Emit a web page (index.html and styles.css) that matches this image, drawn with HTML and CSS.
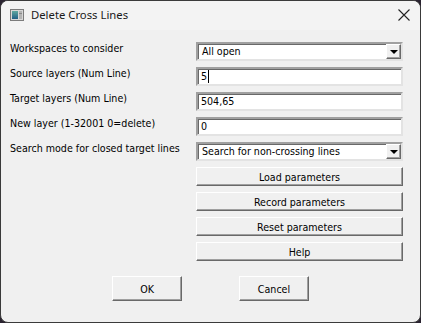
FILE: index.html
```html
<!DOCTYPE html>
<html lang="en">
<head>
    <meta charset="UTF-8">
    <title>Delete Cross Lines</title>
    <link rel="stylesheet" href="styles.css">
</head>
<body>
    <div class="window">
        <div class="titlebar">
            <svg class="app-icon" width="14" height="12" viewBox="0 0 14 12">
                <defs>
                    <linearGradient id="pane" x1="0" y1="0" x2="0" y2="1">
                        <stop offset="0" stop-color="#5fa8a0"/>
                        <stop offset="1" stop-color="#1f5f86"/>
                    </linearGradient>
                </defs>
                <rect x="0.5" y="0.5" width="13" height="11" fill="#d8d8d8" stroke="#7c7c7c"/>
                <rect x="2" y="2" width="6" height="8" fill="url(#pane)"/>
                <rect x="9" y="2" width="3" height="8" fill="#b4b4b4"/>
                <line x1="9" y1="4.5" x2="12" y2="4.5" stroke="#8a8a8a"/>
            </svg>
            <span class="title">Delete Cross Lines</span>
            <svg class="close" width="12" height="12" viewBox="0 0 12 12">
                <path d="M0.5 0.5 L11.5 11.5 M11.5 0.5 L0.5 11.5" stroke="#222" stroke-width="1.1" fill="none"/>
            </svg>
        </div>

        <div class="content">
            <div class="form">
                <label class="field-label">Workspaces to consider</label>
                <div class="combo">
                    <span class="combo-text">All open</span>
                    <span class="combo-arrow"><span class="tri"></span></span>
                </div>

                <label class="field-label">Source layers (Num Line)</label>
                <div class="edit">5<span class="caret"></span></div>

                <label class="field-label">Target layers (Num Line)</label>
                <div class="edit">504,65</div>

                <label class="field-label">New layer (1-32001 0=delete)</label>
                <div class="edit">0</div>

                <label class="field-label">Search mode for closed target lines</label>
                <div class="combo">
                    <span class="combo-text">Search for non-crossing lines</span>
                    <span class="combo-arrow"><span class="tri"></span></span>
                </div>

                <button class="btn wide">Load parameters</button>
                <button class="btn wide">Record parameters</button>
                <button class="btn wide">Reset parameters</button>
                <button class="btn wide">Help</button>
            </div>

            <div class="actions">
                <button class="btn action">OK</button>
                <button class="btn action">Cancel</button>
            </div>
        </div>
    </div>
</body>
</html>
```

FILE: styles.css
```css
body {
    margin: 0;
    background: #2a2330;
    font-family: "DejaVu Sans Condensed", "DejaVu Sans", sans-serif;
    font-size: 10.6px;
    color: #000;
}

.window {
    width: 421px;
    height: 323px;
    box-sizing: border-box;
    border: 1px solid #3a3a3a;
    border-radius: 8px;
    background: #f0f0f0;
    overflow: hidden;
}

.titlebar {
    height: 29px;
    box-sizing: border-box;
    display: flex;
    align-items: center;
    padding: 0 9px 2px 9px;
    background: #f3f3f3;
}

.app-icon {
    margin-right: 7px;
}

.title {
    flex: 1;
    font-family: "Noto Sans", sans-serif;
    font-size: 11.3px;
    color: #1a1a1a;
}

.close {
    margin-right: 1px;
}

.content {
    padding: 12px 0 0 9px;
}

.form {
    display: grid;
    grid-template-columns: 186px 207px;
    grid-auto-rows: 19px;
    row-gap: 6px;
}

.field-label {
    grid-column: 1;
    line-height: 13px;
    white-space: nowrap;
}

.edit,
.combo {
    grid-column: 2;
    box-sizing: border-box;
    height: 19px;
    background: #fff;
    border-style: solid;
    border-width: 2px;
    border-color: #a0a0a0 #e3e3e3 #e3e3e3 #a0a0a0;
    box-shadow: inset 1px 1px 0 #696969;
    padding: 0 3px;
    line-height: 15px;
    display: flex;
    align-items: center;
}

.caret {
    display: inline-block;
    width: 1px;
    height: 13px;
    background: #000;
    margin-left: 1px;
}

.combo {
    padding-right: 0;
}

.combo-text {
    flex: 1;
    padding-left: 1px;
}

.combo-arrow {
    width: 15px;
    height: 15px;
    box-sizing: border-box;
    background: #f0f0f0;
    border-style: solid;
    border-width: 1px;
    border-color: #fff #696969 #696969 #fff;
    box-shadow: inset -1px -1px 0 #a0a0a0;
    display: flex;
    align-items: center;
    justify-content: center;
}

.tri {
    width: 0;
    height: 0;
    border-left: 4px solid transparent;
    border-right: 4px solid transparent;
    border-top: 4px solid #000;
}

.btn {
    box-sizing: border-box;
    background: #f0f0f0;
    font-family: "DejaVu Sans Condensed", "DejaVu Sans", sans-serif;
    font-size: 10.6px;
    color: #000;
    border-style: solid;
    border-width: 1px;
    border-color: #fff #696969 #696969 #fff;
    box-shadow: inset -1px -1px 0 #a0a0a0;
    padding: 0;
    margin: 0;
}

.btn.wide {
    grid-column: 2;
    height: 19px;
}

.actions {
    display: flex;
    justify-content: center;
    gap: 57px;
    margin: 15px 0 0 -9px;
}

.btn.action {
    width: 70px;
    height: 25px;
}
```
